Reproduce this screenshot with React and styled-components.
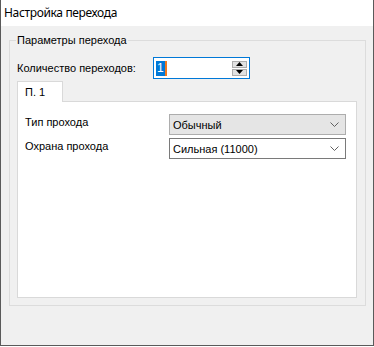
import React from 'react'
import styled, { createGlobalStyle } from 'styled-components'

const GlobalStyle = createGlobalStyle`
  html, body {
    margin: 0;
    padding: 0;
    background: #ffffff;
  }
  body {
    font-family: "Liberation Sans", Arial, sans-serif;
    font-size: 11px;
    color: #000;
  }
`

const Window = styled.div`
  width: 374px;
  height: 346px;
  box-sizing: border-box;
  border: 1px solid #5a5a5a;
  border-top: none;
  display: flex;
  flex-direction: column;
`

const TitleBar = styled.div`
  height: 26px;
  box-sizing: border-box;
  flex-shrink: 0;
  background: #ffffff;
  display: flex;
  align-items: center;
  padding: 0 0 2px 3px;
  font-family: "Noto Sans", "Open Sans", sans-serif;
  font-size: 12px;
  letter-spacing: -0.35px;
`

const Body = styled.div`
  flex: 1;
  background: #f0f0f0;
  padding: 14px 7px 0 8px;
`

const Group = styled.div`
  position: relative;
  height: 266px;
  box-sizing: border-box;
  border: 1px solid #dcdcdc;
  padding: 16px 8px 7px 7px;
  display: flex;
  flex-direction: column;
`

const Legend = styled.span`
  position: absolute;
  top: -8px;
  left: 6px;
  padding: 0 1px;
  background: #f0f0f0;
  line-height: 14px;
`

const CountRow = styled.div`
  display: flex;
  align-items: center;
  height: 22px;
`

const CountLabel = styled.span`
  width: 136px;
`

const Spinner = styled.div`
  width: 97px;
  height: 22px;
  box-sizing: border-box;
  border: 1px solid #0078d7;
  background: #fff;
  display: flex;
  align-items: center;
  padding: 0 2px 0 2px;
`

const SpinValue = styled.span`
  display: flex;
  align-items: center;
  height: 15px;
`

const Selected = styled.span`
  background: #0078d7;
  color: #fff;
  height: 15px;
  line-height: 15px;
  padding: 0 1px;
  font-size: 12px;
`

const Caret = styled.span`
  width: 2px;
  height: 15px;
  background: #f0781e;
`

const SpinButtons = styled.div`
  margin-left: auto;
  display: flex;
  flex-direction: column;
  gap: 1px;
`

const SpinButton = styled.div`
  width: 15px;
  height: 7px;
  box-sizing: border-box;
  background: #e1e1e1;
  border: 1px solid #adadad;
  display: flex;
  align-items: center;
  justify-content: center;
`

const Tabs = styled.div`
  margin-top: 2px;
  display: flex;
  flex-direction: column;
  flex: 1;
`

const TabStrip = styled.div`
  display: flex;
`

const Tab = styled.div`
  width: 46px;
  height: 21px;
  box-sizing: border-box;
  border: 1px solid #d9d9d9;
  border-bottom: none;
  background: #fff;
  padding-left: 7px;
  line-height: 20px;
  margin-bottom: -1px;
  position: relative;
  z-index: 1;
`

const Panel = styled.div`
  flex: 1;
  box-sizing: border-box;
  border: 1px solid #d9d9d9;
  background: #fff;
  padding: 12px 10px 0 7px;
  display: grid;
  grid-template-columns: 144px 177px;
  grid-auto-rows: 21px;
  row-gap: 3px;
  align-content: start;
`

const FieldLabel = styled.span`
  padding-top: 2px;
  line-height: 13px;
`

const Combo = styled.div`
  box-sizing: border-box;
  height: 21px;
  border: 1px solid ${p => (p.disabled ? '#adadad' : '#7a7a7a')};
  background: ${p => (p.disabled ? '#e5e5e5' : '#ffffff')};
  display: flex;
  align-items: center;
  padding: 0 6px 0 3px;
`

const ComboText = styled.span`
  flex: 1;
`

const Chevron = () => (
  <svg width="9" height="5" viewBox="0 0 9 5">
    <path d="M0.5 0.5 L4.5 4.5 L8.5 0.5" fill="none" stroke="#606060" strokeWidth="1" />
  </svg>
)

const Arrow = ({ up }) => (
  <svg width="7" height="4" viewBox="0 0 7 4">
    <path d={up ? 'M0 4 L3.5 0 L7 4 Z' : 'M0 0 L3.5 4 L7 0 Z'} fill="#000" />
  </svg>
)

const App = () => {
  return (
    <>
      <GlobalStyle />
      <Window>
        <TitleBar>Настройка перехода</TitleBar>
        <Body>
          <Group>
            <Legend>Параметры перехода</Legend>
            <CountRow>
              <CountLabel>Количество переходов:</CountLabel>
              <Spinner>
                <SpinValue>
                  <Selected>1</Selected>
                  <Caret />
                </SpinValue>
                <SpinButtons>
                  <SpinButton><Arrow up /></SpinButton>
                  <SpinButton><Arrow /></SpinButton>
                </SpinButtons>
              </Spinner>
            </CountRow>
            <Tabs>
              <TabStrip>
                <Tab>П. 1</Tab>
              </TabStrip>
              <Panel>
                <FieldLabel>Тип прохода</FieldLabel>
                <Combo disabled>
                  <ComboText>Обычный</ComboText>
                  <Chevron />
                </Combo>
                <FieldLabel>Охрана прохода</FieldLabel>
                <Combo>
                  <ComboText>Сильная (11000)</ComboText>
                  <Chevron />
                </Combo>
              </Panel>
            </Tabs>
          </Group>
        </Body>
      </Window>
    </>
  )
}

export default App
